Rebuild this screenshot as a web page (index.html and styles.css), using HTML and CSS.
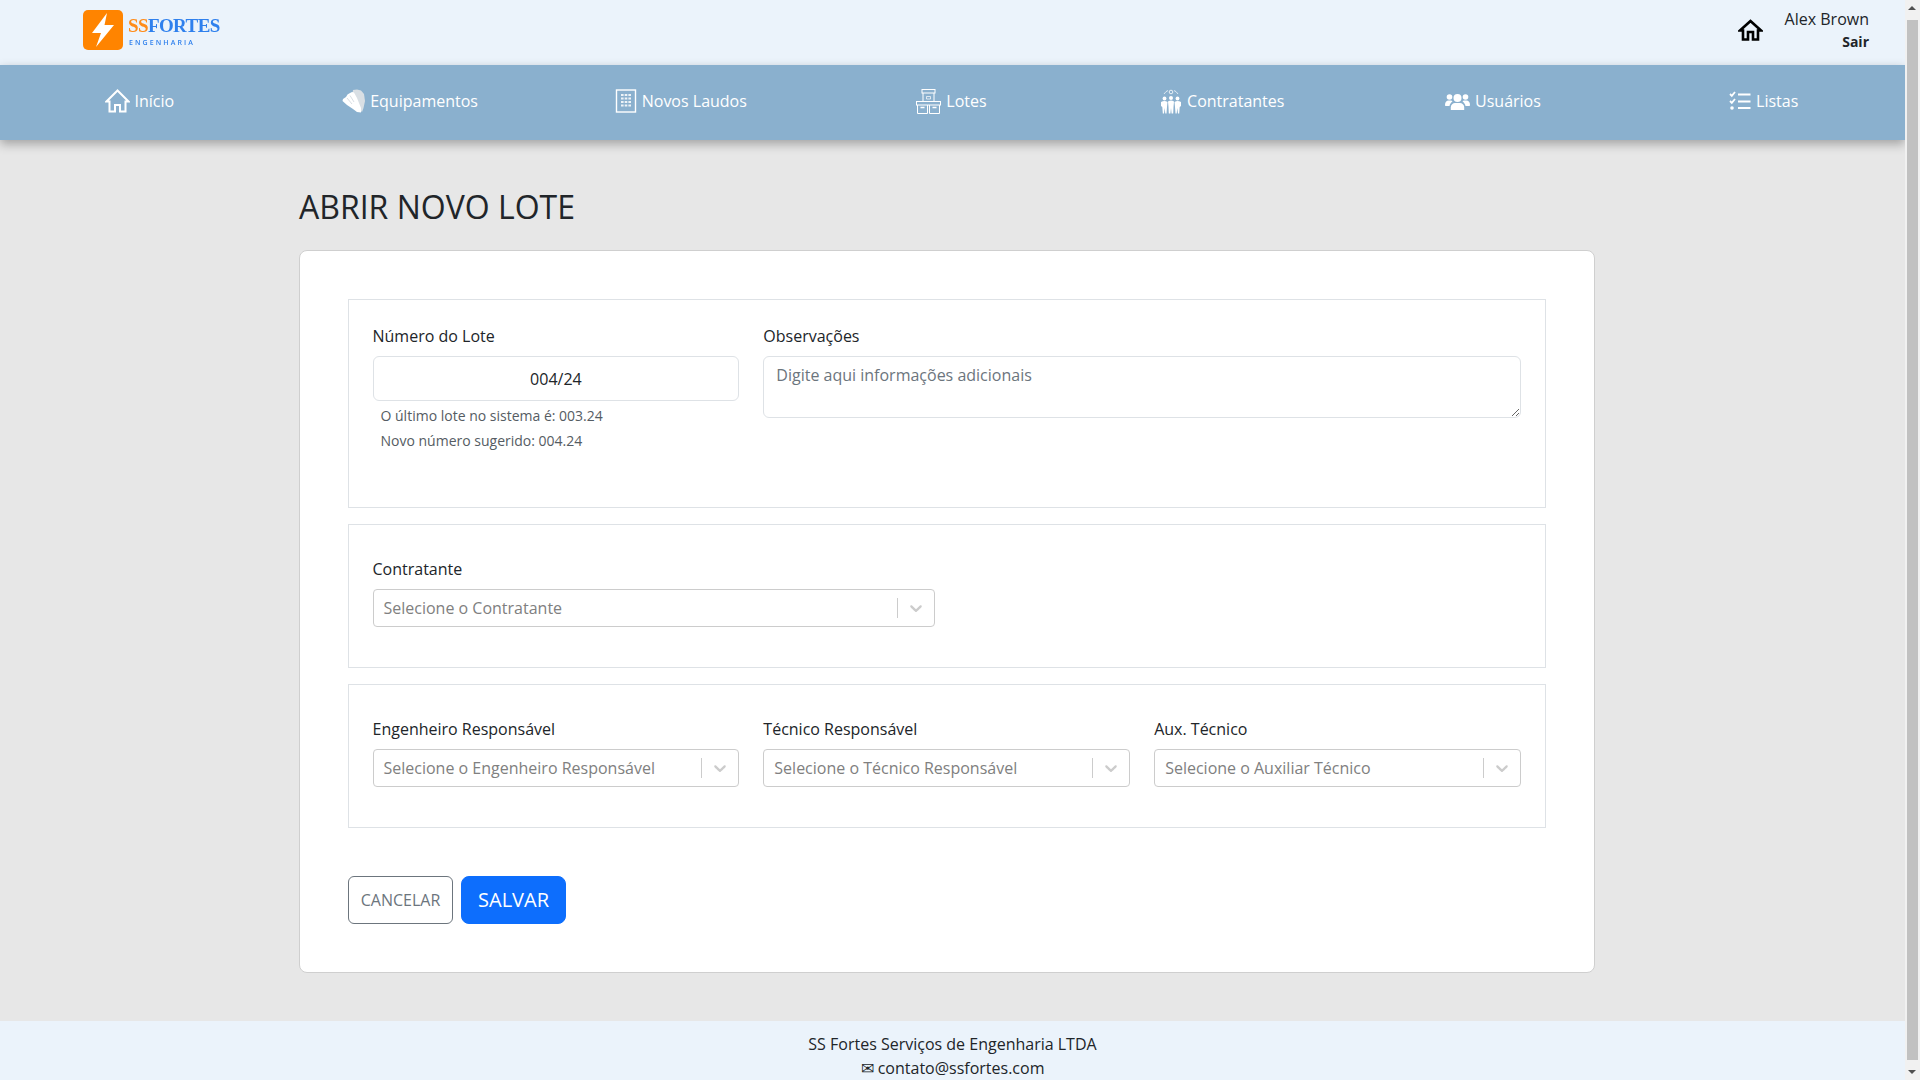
FILE: index.html
```html
<!DOCTYPE html>
<html lang="pt-BR">
<head>
    <meta charset="utf-8" />
    <title>Abrir novo lote</title>
    <link rel="stylesheet" href="styles.css">
</head>
<body>
    <header class="topbar">
        <a class="logo" href="#">
            <svg class="logo-mark" viewBox="0 0 40 40" width="40" height="40">
                <rect width="40" height="40" rx="5" fill="#ff8400" />
                <path d="M24 3 L9 23 H18 L13 37 L31 15 H21.5 Z" fill="#fff" />
            </svg>
            <span class="logo-text">
                <span class="logo-name"><span class="logo-ss">SS</span>FORTES</span>
                <span class="logo-sub">ENGENHARIA</span>
            </span>
        </a>
        <div class="user-area">
            <svg class="user-home" viewBox="0 0 25 22" width="25" height="22">
                <path d="M12.5 2 L2 11.5 H5 V20.5 H10 V13 H15 V20.5 H20 V11.5 H23 Z" fill="none" stroke="#000" stroke-width="2.6" stroke-linejoin="miter" />
            </svg>
            <div class="user-info">
                <div class="user-name">Alex Brown</div>
                <a class="user-exit" href="#">Sair</a>
            </div>
        </div>
    </header>

    <nav class="mainnav">
        <a class="nav-item" href="#">
            <svg viewBox="0 0 25 24" width="25" height="24">
                <path d="M12.5 1.5 L1.5 12.5 H4.5 V22.5 H10 V16 H15 V22.5 H20.5 V12.5 H23.5 Z" fill="none" stroke="#fff" stroke-width="2" />
            </svg>
            Início
        </a>
        <a class="nav-item" href="#">
            <svg viewBox="0 0 23 24" width="23" height="24">
                <path d="M11 1 L15 0.5 L19 1.5 L22 5 L23 12 L21.5 19 L20 23 L15 18 L10 8 Z" fill="#d9dfe4" />
                <path d="M1 10 L4 8 L5.5 5.5 L8 4 L10 3 L12 3.5 L15 9 L17 14 L19 19 L19 23.5 L15 23 L11 20 L5 16 L0.5 12 Z" fill="#fff" />
                <path d="M5 9 L10 15 M8 6.5 L12 13" stroke="#cfd6dc" stroke-width="0.8" />
            </svg>
            Equipamentos
        </a>
        <a class="nav-item" href="#">
            <svg viewBox="0 0 22 24" width="22" height="24">
                <rect x="1.5" y="1" width="19" height="22" fill="none" stroke="#fff" stroke-width="1.4" />
                <path d="M6 6 H16 M6 9.5 H16 M6 13 H16 M6 16.5 H16" stroke="#fff" stroke-width="2" stroke-dasharray="2.6 1.1" opacity="0.85" />
            </svg>
            Novos Laudos
        </a>
        <a class="nav-item" href="#">
            <svg viewBox="0 0 25 25" width="25" height="25" fill="none" stroke="#fff" stroke-width="1">
                <rect x="6" y="0.5" width="13" height="3.5" />
                <path d="M7 4 V12 M18 4 V12" />
                <path d="M10.5 7.5 H14.5 V10 H10.5 Z" opacity="0.7" />
                <rect x="0.5" y="12.5" width="24" height="3.5" />
                <path d="M1.5 16 V24.5 H11.5 V16 M13.5 16 V24.5 H23.5 V16" />
                <path d="M4.5 18.5 H8.5 M16.5 18.5 H20.5" stroke-width="1.4" />
            </svg>
            Lotes
        </a>
        <a class="nav-item" href="#">
            <svg viewBox="0 0 22 25" width="22" height="25" fill="#fff">
                <circle cx="11" cy="3" r="1.8" fill="none" stroke="#fff" stroke-width="0.8" />
                <path d="M4 5 Q6 2 8 1.5 M18 5 Q16 2 14 1.5" fill="none" stroke="#fff" stroke-width="0.7" />
                <circle cx="4.500" cy="9.500" r="1.900" />
                <circle cx="11" cy="9" r="2" />
                <circle cx="17.500" cy="9.500" r="1.900" />
                <path d="M1 13 Q4.500 11 7.500 13 L7 18 L6.500 24.500 H5.300 L4.700 19 L4 24.500 H2.800 L2.300 18 L1 17 Z" />
                <path d="M8 12.500 Q11 10.500 14 12.500 L13.500 18 L13.200 24.500 H11.600 L11 19 L10.400 24.500 H8.800 L8.500 18 Z" />
                <path d="M14.500 13 Q17.500 11 21 13 L21 17 L19.700 18 L19.200 24.500 H18 L17.300 19 L16.700 24.500 H15.500 L15 18 Z" />
            </svg>
            Contratantes
        </a>
        <a class="nav-item" href="#">
            <svg viewBox="0 0 25 20" width="25" height="20" fill="#fff">
                <circle cx="4.500" cy="6" r="2.800" />
                <circle cx="20.500" cy="6" r="2.800" />
                <circle cx="12.500" cy="7" r="4" />
                <path d="M5.800 19 V16.500 C5.800 13.500 8 12 10 12 H15 C17 12 19.200 13.500 19.200 16.500 V19 Z" />
                <path d="M0 14 C0 11 1.500 9.500 3.500 9.500 H6 C6.500 9.500 7 10 7.500 10.500 C6 11.500 4.800 13 4.500 15 H1 C0.400 15 0 14.600 0 14 Z" />
                <path d="M25 14 C25 11 23.500 9.500 21.500 9.500 H19 C18.500 9.500 18 10 17.500 10.500 C19 11.500 20.200 13 20.500 15 H24 C24.600 15 25 14.600 25 14 Z" />
            </svg>
            Usuários
        </a>
        <a class="nav-item" href="#">
            <svg viewBox="0 0 22 20" width="22" height="20" fill="none" stroke="#fff">
                <path d="M1 3 L2.800 4.800 L6 1 M1 10 L2.800 11.800 L6 8" stroke-width="1.800" />
                <circle cx="3" cy="17" r="1.800" fill="#fff" stroke="none" />
                <path d="M9 3.500 H21.500 M9 10.500 H21.500 M9 17 H21.500" stroke-width="2" />
            </svg>
            Listas
        </a>
    </nav>

    <main class="page">
        <h2 class="page-title">ABRIR NOVO LOTE</h2>
        <form class="card">
            <section class="box box-lote">
                <div class="col">
                    <label class="field-label" for="numeroLote">Número do Lote</label>
                    <input class="field-input" id="numeroLote" type="text" value="004/24" />
                    <p class="help">O último lote no sistema é: 003.24</p>
                    <p class="help">Novo número sugerido: 004.24</p>
                </div>
                <div class="col col-obs">
                    <label class="field-label" for="observacoes">Observações</label>
                    <textarea class="field-area" id="observacoes" placeholder="Digite aqui informações adicionais"></textarea>
                </div>
            </section>

            <section class="box box-select">
                <div class="col col-half">
                    <div class="field-label">Contratante</div>
                    <div class="select">
                        <span class="select-text">Selecione o Contratante</span>
                        <span class="select-sep"></span>
                        <svg class="select-arrow" viewBox="0 0 20 20" width="20" height="20"><path d="M4.516 7.548c0.436-0.446 1.043-0.481 1.576 0l3.908 3.747 3.908-3.747c0.533-0.481 1.141-0.446 1.574 0 0.436 0.445 0.408 1.197 0 1.615-0.406 0.418-4.695 4.502-4.695 4.502-0.217 0.223-0.502 0.335-0.787 0.335s-0.57-0.112-0.789-0.335c0 0-4.287-4.084-4.695-4.502s-0.436-1.17 0-1.615z" /></svg>
                    </div>
                </div>
            </section>

            <section class="box box-select">
                <div class="col">
                    <div class="field-label">Engenheiro Responsável</div>
                    <div class="select">
                        <span class="select-text">Selecione o Engenheiro Responsável</span>
                        <span class="select-sep"></span>
                        <svg class="select-arrow" viewBox="0 0 20 20" width="20" height="20"><path d="M4.516 7.548c0.436-0.446 1.043-0.481 1.576 0l3.908 3.747 3.908-3.747c0.533-0.481 1.141-0.446 1.574 0 0.436 0.445 0.408 1.197 0 1.615-0.406 0.418-4.695 4.502-4.695 4.502-0.217 0.223-0.502 0.335-0.787 0.335s-0.57-0.112-0.789-0.335c0 0-4.287-4.084-4.695-4.502s-0.436-1.17 0-1.615z" /></svg>
                    </div>
                </div>
                <div class="col">
                    <div class="field-label">Técnico Responsável</div>
                    <div class="select">
                        <span class="select-text">Selecione o Técnico Responsável</span>
                        <span class="select-sep"></span>
                        <svg class="select-arrow" viewBox="0 0 20 20" width="20" height="20"><path d="M4.516 7.548c0.436-0.446 1.043-0.481 1.576 0l3.908 3.747 3.908-3.747c0.533-0.481 1.141-0.446 1.574 0 0.436 0.445 0.408 1.197 0 1.615-0.406 0.418-4.695 4.502-4.695 4.502-0.217 0.223-0.502 0.335-0.787 0.335s-0.57-0.112-0.789-0.335c0 0-4.287-4.084-4.695-4.502s-0.436-1.17 0-1.615z" /></svg>
                    </div>
                </div>
                <div class="col">
                    <div class="field-label">Aux. Técnico</div>
                    <div class="select">
                        <span class="select-text">Selecione o Auxiliar Técnico</span>
                        <span class="select-sep"></span>
                        <svg class="select-arrow" viewBox="0 0 20 20" width="20" height="20"><path d="M4.516 7.548c0.436-0.446 1.043-0.481 1.576 0l3.908 3.747 3.908-3.747c0.533-0.481 1.141-0.446 1.574 0 0.436 0.445 0.408 1.197 0 1.615-0.406 0.418-4.695 4.502-4.695 4.502-0.217 0.223-0.502 0.335-0.787 0.335s-0.57-0.112-0.789-0.335c0 0-4.287-4.084-4.695-4.502s-0.436-1.17 0-1.615z" /></svg>
                    </div>
                </div>
            </section>

            <div class="actions">
                <button class="btn btn-cancel" type="button">CANCELAR</button>
                <button class="btn btn-save" type="button">SALVAR</button>
            </div>
        </form>
    </main>

    <footer class="footer">
        <div>SS Fortes Serviços de Engenharia LTDA</div>
        <div>✉ contato@ssfortes.com</div>
    </footer>

    <div class="scrollbar">
        <span class="scroll-arrow scroll-up"></span>
        <span class="scroll-thumb"></span>
        <span class="scroll-arrow scroll-down"></span>
    </div>
</body>
</html>
```

FILE: styles.css
```css
body {
    margin: 0 15px 0 0;
    background-color: #e7e7e7;
    color: #212529;
    font-family: "Open Sans", sans-serif;
    font-size: 16px;
    line-height: 24px;
}

a {
    color: inherit;
    text-decoration: none;
}

/* the browser's own scrollbar is not drawn in the headless shot */
html::-webkit-scrollbar {
    display: none;
}

.scrollbar {
    position: fixed;
    top: 0;
    right: 0;
    bottom: 0;
    width: 15px;
    background-color: #f1f1f1;
    display: flex;
    flex-direction: column;
    align-items: center;
}

.scroll-thumb {
    flex: 1;
    width: 11px;
    background-color: #c1c1c1;
}

.scroll-arrow {
    height: 20px;
    width: 15px;
    box-sizing: border-box;
    position: relative;
}

.scroll-up::after,
.scroll-down::after {
    content: "";
    position: absolute;
    left: 3px;
    border-left: 4px solid transparent;
    border-right: 4px solid transparent;
}

.scroll-up::after {
    top: 6px;
    border-bottom: 4px solid #505050;
}

.scroll-down::after {
    bottom: 6px;
    border-top: 4px solid #505050;
}

.topbar {
    height: 65px;
    background-color: #ebf3fb;
    display: flex;
    align-items: center;
    justify-content: space-between;
    padding: 0 36px 0 83px;
}

.logo {
    display: flex;
    align-items: center;
    gap: 5px;
    margin-top: -5px;
    filter: blur(0.3px);
}

.logo-mark {
    display: block;
}

.logo-text {
    display: flex;
    flex-direction: column;
    padding-top: 2px;
}

.logo-name {
    font-family: "Liberation Serif", serif;
    font-size: 19px;
    font-weight: bold;
    line-height: 22px;
    letter-spacing: -0.6px;
    color: #2f80ed;
}

.logo-ss {
    color: #ff8c1a;
}

.logo-sub {
    font-size: 7px;
    font-weight: 600;
    line-height: 11px;
    letter-spacing: 2.1px;
    color: #2f80ed;
    padding-left: 1px;
}

.user-area {
    display: flex;
    align-items: center;
    gap: 22px;
}

.user-home {
    display: block;
    margin-bottom: 6px;
}

.user-info {
    text-align: right;
}

.user-name {
    line-height: 24px;
    margin-top: -5px;
}

.user-exit {
    display: block;
    font-size: 14px;
    font-weight: 700;
    line-height: 22px;
}

.mainnav {
    height: 75px;
    background-color: #8ab0ce;
    box-shadow: 0 4px 10px rgba(0, 0, 0, 0.3);
    display: flex;
    padding: 0 6px 0 4px;
}

.nav-item {
    flex: 1;
    display: flex;
    align-items: center;
    justify-content: center;
    gap: 5px;
    color: #fff;
    padding-bottom: 3px;
}

.page {
    width: 1296px;
    margin-left: 299px;
    padding: 46px 0 48px;
}

.page-title {
    margin: 0 0 23px;
    font-size: 32px;
    font-weight: 400;
    line-height: 41px;
}

.card {
    display: block;
    background-color: #fff;
    border: 1px solid #cfcfcf;
    border-radius: 8px;
    padding: 48px;
}

.box {
    background-color: #fff;
    border: 1px solid #dee2e6;
    padding: 24px 24px 24px 23.5px;
    margin-bottom: 16px;
    display: grid;
    grid-template-columns: repeat(3, 1fr);
    gap: 24px;
}

.box-lote {
    padding-bottom: 54px;
}

.box-select {
    padding-top: 32px;
    padding-bottom: 40px;
}

.col-obs {
    grid-column: span 2;
}

.col-half {
    grid-column: span 3;
    width: 562px;
}

.field-label {
    display: block;
    margin-bottom: 8px;
}

.field-input {
    display: block;
    width: 100%;
    height: 45px;
    box-sizing: border-box;
    border: 1px solid #dee2e6;
    border-radius: 6px;
    padding: 6px 12px;
    font-family: inherit;
    font-size: 16px;
    color: #212529;
    text-align: center;
}

.field-area {
    display: block;
    width: 100%;
    height: 62px;
    box-sizing: border-box;
    border: 1px solid #dee2e6;
    border-radius: 6px;
    padding: 6px 12px;
    font-family: inherit;
    font-size: 16px;
    line-height: 24px;
    color: #212529;
}

.field-area::placeholder {
    color: #6c757d;
    opacity: 1;
}

.help {
    margin: 0 0 0 8px;
    font-size: 14px;
    line-height: 25px;
    color: #555c63;
}

.field-input + .help {
    margin-top: 2px;
}

.select {
    height: 38px;
    box-sizing: border-box;
    border: 1px solid #ccc;
    border-radius: 4px;
    display: flex;
    align-items: center;
    padding-left: 10px;
}

.select-text {
    flex: 1;
    color: #808080;
}

.select-sep {
    width: 1px;
    height: 20px;
    background-color: #ccc;
}

.select-arrow {
    display: block;
    padding: 8px;
    fill: #ccc;
}

.actions {
    display: flex;
    gap: 8px;
    padding-top: 32px;
}

.btn {
    width: 105px;
    height: 48px;
    font-family: inherit;
    cursor: pointer;
    padding: 0;
}

.btn-cancel {
    background-color: #fff;
    border: 1px solid #6c757d;
    border-radius: 6px;
    color: #6c757d;
    font-size: 16px;
}

.btn-save {
    background-color: #0d6efd;
    border: 1px solid #0d6efd;
    border-radius: 8px;
    color: #fff;
    font-size: 20px;
    padding-bottom: 2px;
}

.footer {
    background-color: #ebf3fb;
    padding: 11px 0;
    text-align: center;
}
```
